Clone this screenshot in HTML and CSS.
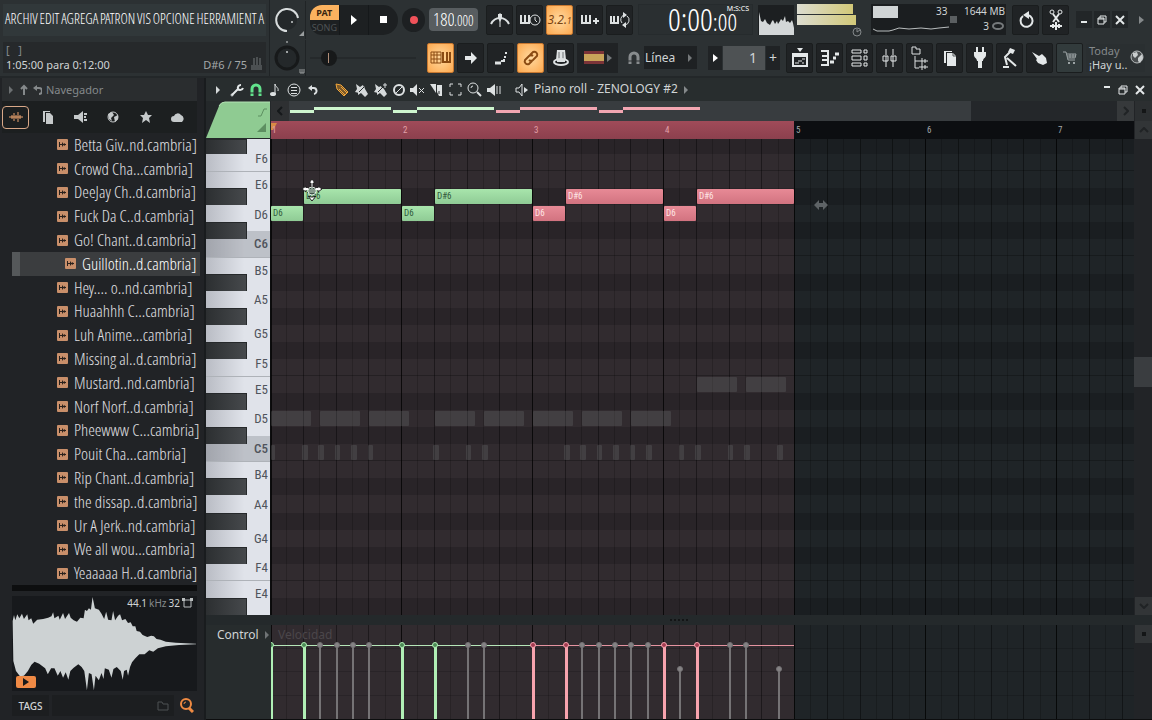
FILE: index.html
```html
<!DOCTYPE html>
<html lang="es">
<head>
    <meta charset="UTF-8">
    <meta name="viewport" content="width=device-width, initial-scale=1.0">
    <title>Piano roll - ZENOLOGY #2</title>
    <link rel="stylesheet" href="styles.css">
</head>
<body>
    <header class="top">
        <div class="top-left">
            <nav class="menu">
                <button>ARCHIV</button><button>EDIT</button><button>AGREGA</button><button>PATRON</button><button>VIS</button><button>OPCIONE</button><button>HERRAMIENT</button><button>A</button>
            </nav>
            <div class="hint">
                <div class="hint-keys">[ &nbsp; ]</div>
                <div class="hint-line">
                    <span>1:05:00 para 0:12:00</span>
                    <span class="hint-note">D#6 / 75</span>
                    <svg width="12" height="14" viewBox="0 0 12 14"><path d="M3 1v8M6 0v9M9 1v8M1 9h9v3H1z" fill="#4c5052" stroke="#4c5052" stroke-width="2"/></svg>
                </div>
            </div>
        </div>

        <div class="bars">
            <div class="bar">
                <div class="knob-cell">
                    <svg width="36" height="38" viewBox="0 0 36 38"><circle cx="17" cy="19" r="10" fill="#24282a"/><path d="M17 30A11 11 0 1 1 28 17" fill="none" stroke="#d8dcdd" stroke-width="2"/><circle cx="22" cy="21" r="1" fill="#c9cdce"/><path d="M34 30v5h-5z" fill="#9a9e9f"/></svg>
                </div>
                <div class="transport">
                    <button class="mode"><span class="pat">PAT</span><span class="song">SONG</span></button>
                    <button aria-label="Play"><svg width="8" height="12" viewBox="0 0 8 12"><path d="M1 1l6 5-6 5z" fill="#fff"/></svg></button>
                    <button aria-label="Stop"><svg width="8" height="8"><rect width="7" height="7" fill="#fff"/></svg></button>
                </div>
                <button class="record" aria-label="Rec"><svg width="10" height="10"><circle cx="5" cy="5" r="4" fill="#f0525a"/></svg></button>
                <label class="tempo"><input value="180" aria-label="Tempo"><span>.000</span></label>
                <div class="tools">
                    <button class="tool" aria-label="Metronome"><svg width="22" height="20" viewBox="0 0 22 20"><path d="M2 14Q5 8 11 8t9 6" fill="none" stroke="#dde1e2" stroke-width="2"/><path d="M11 17V3" stroke="#dde1e2"/><path d="M9 4h4v4l-2 4-2-4z" fill="#dde1e2"/></svg></button>
                    <button class="tool" aria-label="Wait"><svg width="22" height="18" viewBox="0 0 22 18"><path d="M2 4v8h9M6 4v8M10 4v8" fill="none" stroke="#dde1e2" stroke-width="2"/><circle cx="16" cy="9" r="5" fill="#202325" stroke="#dde1e2" stroke-width="1"/><path d="M16 6v3l2 2" fill="none" stroke="#dde1e2"/></svg></button>
                    <button class="tool on" aria-label="Countdown"><span class="lcd">3.2.<small>1</small></span></button>
                    <button class="tool" aria-label="Blend"><svg width="20" height="18" viewBox="0 0 20 18"><path d="M2 4v8h9M6 4v8M10 4v8M13 10h6M16 7v6" fill="none" stroke="#dde1e2" stroke-width="2"/></svg></button>
                    <button class="tool" aria-label="Loop"><svg width="20" height="18" viewBox="0 0 20 18"><path d="M1 5v7h8M4 5v7M8 5v7" fill="none" stroke="#dde1e2" stroke-width="2"/><path d="M12 12a5 5 0 0 1 2-8M17 5a5 5 0 0 1-2 9" fill="none" stroke="#dde1e2"/><path d="M13 1l4 3-4 3zM16 11l-4 3 4 3z" fill="#dde1e2"/></svg></button>
                </div>
                <div class="clock">
                    <span class="clock-big">0:00</span><span class="clock-cs">:00</span><span class="clock-unit">M:S:CS</span>
                </div>
                <svg class="scope" width="36" height="30" viewBox="0 0 36 30"><path d="M1 30V7l2 9 2 1 2-3 2 4 3 2 2-4 1-1 2 4 2-3 1 3 2-3 1-2 2 2 2-5 1 6 2-1 2 2 2-3 1 3 1 5v9z" fill="#d3d7d8"/></svg>
                <div class="meters">
                    <i class="meter meter-l"></i>
                    <i class="meter meter-r"></i>
                    <svg width="11" height="10" viewBox="0 0 11 10"><ellipse cx="5" cy="5" rx="4" ry="4" fill="none" stroke="#84888a" stroke-width="1"/><path d="M5 5l3-2M5 5V2" stroke="#84888a"/></svg>
                </div>
                <div class="cpu">
                    <div class="cpu-col">
                        <i class="cpu-bar"></i>
                        <svg width="78" height="8" viewBox="0 0 78 8"><path d="M1 3l4 2 12 0 4-1 6-2 10 1 12-1 10 1 8-1 10-1" fill="none" stroke="#b9bdbe" stroke-width="1"/></svg>
                    </div>
                    <span class="cpu-load">33</span>
                    <svg class="cpu-chip" width="7" height="7"><rect width="7" height="7" fill="#5b5f61"/></svg>
                    <div class="cpu-mem"><span>1644 MB</span><span>3 <svg width="13" height="9" viewBox="0 0 13 9"><ellipse cx="6" cy="4" rx="5" ry="3" fill="none" stroke="#75797b" stroke-width="2"/></svg></span></div>
                </div>
                <div class="tools">
                    <button class="tool" aria-label="Undo"><svg width="18" height="20" viewBox="0 0 18 20"><path d="M6 6A6 6 0 1 0 11 5" fill="none" stroke="#e4e8e9" stroke-width="2"/><path d="M12 1v8L6 5z" fill="#e4e8e9"/></svg></button>
                    <button class="tool" aria-label="Cut"><svg width="16" height="22" viewBox="0 0 16 22"><circle cx="4" cy="3" r="2" fill="none" stroke="#e4e8e9"/><circle cx="12" cy="3" r="2" fill="none" stroke="#e4e8e9"/><path d="M5 5l6 8M11 5l-6 8" stroke="#e4e8e9" stroke-width="2"/><path d="M2 17h12M5 15v4M8 13v8M11 15v4" stroke="#e4e8e9" stroke-width="2"/></svg></button>
                </div>
                <div class="win">
                    <button aria-label="Minimizar"><svg width="9" height="9"><path d="M1 7h6" stroke="#e4e8e9" stroke-width="2"/></svg></button>
                    <button aria-label="Restaurar"><svg width="10" height="10" viewBox="0 0 10 10"><path d="M1 3h6v6H1zM3 3V1h6v6H7M1 4h6" fill="none" stroke="#e4e8e9"/></svg></button>
                    <button aria-label="Cerrar"><svg width="10" height="10"><path d="M1 1l8 8M9 1L1 9" stroke="#e4e8e9" stroke-width="2"/></svg></button>
                </div>
                <svg class="more" width="5" height="8"><path d="M0 0l5 4-5 4z" fill="#85898b"/></svg>
            </div>

            <div class="bar">
                <div class="knob-cell">
                    <svg width="36" height="36" viewBox="0 0 36 36"><circle cx="17" cy="18" r="11" fill="#24282a" stroke="#17191a" stroke-width="3"/><circle cx="17" cy="12" r="1" fill="#c9cdce"/><circle cx="17" cy="2" r="1" fill="#9a9e9f"/><path d="M30 29v4h4v-4M32 29v4" fill="none" stroke="#9a9e9f"/></svg>
                </div>
                <div class="slide"><input type="range" min="0" max="100" value="12" aria-label="Pitch"></div>
                <div class="tools">
                    <button class="tool on" aria-label="Typing keyboard"><svg width="22" height="14" viewBox="0 0 22 14"><path d="M1 1h10v11H1zM1 4h10M1 8h10M4 1v11M7 1v11" fill="none" stroke="#8a4a12"/><path d="M13 1v10h8M17 1v10M20 1v10" fill="none" stroke="#8a4a12" stroke-width="2"/></svg></button>
                    <button class="tool" aria-label="Step"><svg width="16" height="14" viewBox="0 0 16 14"><path d="M2 5h6V1l6 6-6 6V9H2z" fill="#e4e8e9"/></svg></button>
                    <button class="tool" aria-label="Slide"><svg width="16" height="16" viewBox="0 0 16 16"><path d="M2 13h6" stroke="#dde1e2" stroke-width="3"/><path d="M8 11h3V9M11 7h2M12 3h2" fill="none" stroke="#dde1e2" stroke-width="2"/></svg></button>
                    <button class="tool on" aria-label="Link"><svg width="18" height="18" viewBox="0 0 18 18"><path d="M8 6l3-3a3 3 0 0 1 4 4l-4 4a3 3 0 0 1-4 0M10 12l-3 3a3 3 0 0 1-4-4l4-4a3 3 0 0 1 4 0" fill="none" stroke="#8a4a12" stroke-width="2"/></svg></button>
                    <button class="tool" aria-label="Multilink"><svg width="18" height="20" viewBox="0 0 18 20"><path d="M5 2h8l1 10H4z" fill="#dde1e2"/><path d="M7 4v8M11 4v8" stroke="#6d7173"/><ellipse cx="9" cy="14" rx="7" ry="3" fill="none" stroke="#dde1e2" stroke-width="2"/><path d="M5 11h8v3H5z" fill="#dde1e2"/></svg></button>
                </div>
                <button class="flag" aria-label="Color"><i></i><svg width="5" height="8"><path d="M0 0l5 4-5 4z" fill="#74787a"/></svg></button>
                <label class="snap">
                    <svg width="12" height="14" viewBox="0 0 12 14"><path d="M2 13V6a4 4 0 0 1 8 0v7" fill="none" stroke="#888c8e" stroke-width="3"/><path d="M0 10h12" stroke="#2c3133"/></svg>
                    <select aria-label="Ajuste"><option>Línea</option></select>
                    <svg class="snap-arrow" width="5" height="8"><path d="M0 0l4 4-4 4z" fill="#74787a"/></svg>
                </label>
                <div class="pattern">
                    <button aria-label="Anterior"><svg width="5" height="8"><path d="M0 0l5 4-5 4z" fill="#fff"/></svg></button>
                    <input value="1" aria-label="Patrón">
                    <button>+</button>
                </div>
                <div class="tools">
                    <button class="tool" aria-label="Playlist"><svg width="18" height="20" viewBox="0 0 18 20"><path d="M2 6h14v12H2zM2 8h14" fill="none" stroke="#e4e8e9" stroke-width="2"/><path d="M6 0h6L9 4z" fill="#e4e8e9"/><path d="M4 15h4M7 13h4M11 11h3M11 15h2" stroke="#e4e8e9"/></svg></button>
                    <button class="tool" aria-label="Piano roll"><svg width="20" height="18" viewBox="0 0 20 18"><path d="M1 2h7v14H1M2 7h5M2 11h5" fill="none" stroke="#e4e8e9" stroke-width="2"/><path d="M10 13h4M13 9h3M15 5h4" stroke="#e4e8e9" stroke-width="3"/></svg></button>
                    <button class="tool" aria-label="Channel rack"><svg width="18" height="20" viewBox="0 0 18 20"><path d="M1 2h9v3H1zM1 8h9v4H1zM1 15h9v3H1zM13 2h3v3h-3zM13 8h3v4h-3zM13 15h3v3h-3z" fill="none" stroke="#e4e8e9"/></svg></button>
                    <button class="tool" aria-label="Mixer"><svg width="16" height="20" viewBox="0 0 16 20"><path d="M4 1v6M4 13v6M11 1v6M11 13v6M1 8h5v5H1zM9 8h5v5H9zM4 8v5M11 8v5" fill="none" stroke="#e4e8e9"/></svg></button>
                    <button class="tool" aria-label="Browser"><svg width="20" height="24" viewBox="0 0 20 24"><path d="M2 8V1h4v2h4v5zM5 10v12h4M5 15h4" fill="none" stroke="#dde1e2"/><path d="M9 15h9M12 12v6M15 13v4M9 21h9M12 18v6M15 19v4" stroke="#dde1e2"/></svg></button>
                    <button class="tool" aria-label="Plugins"><svg width="14" height="16" viewBox="0 0 14 16"><path d="M1 1h8v1H3v11H1z" fill="#e4e8e9"/><path d="M4 3h6l3 3v10H4z" fill="#e4e8e9"/><path d="M10 3v3h3" fill="none" stroke="#54585a"/></svg></button>
                    <button class="tool" aria-label="Plug"><svg width="14" height="22" viewBox="0 0 14 22"><path d="M4 0v5M10 0v5" stroke="#e4e8e9" stroke-width="2"/><path d="M1 5h12v3c0 3-3 3-3 6H9v7H5v-7H4c0-3-3-3-3-6z" fill="#e4e8e9"/></svg></button>
                    <button class="tool" aria-label="Project"><svg width="18" height="22" viewBox="0 0 18 22"><path d="M9 1l5 2-2 4-5-2z" fill="#e4e8e9"/><path d="M9 5L4 10l2 8M6 11l9 8M2 20h6" fill="none" stroke="#e4e8e9" stroke-width="2"/></svg></button>
                    <button class="tool" aria-label="Touch"><svg width="18" height="16" viewBox="0 0 18 16"><path d="M1 2l7 4 3-2 4 4 1 5-4 2-5-2-2-3 1-1z" fill="#e4e8e9"/></svg></button>
                    <button class="tool cart" aria-label="Shop"><svg width="14" height="14" viewBox="0 0 14 14"><path d="M0 1h3l2 8h7M4 3h9l-1 4H5M7 3v4M10 3v4M4 5h9" fill="none" stroke="#9ba3a4"/><path d="M5 11h2v2H5zM10 11h2v2h-2z" fill="#9ba3a4"/></svg></button>
                </div>
                <div class="news">
                    <div><div class="news-day">Today</div><div>¡Hay u..</div></div>
                    <svg width="15" height="15" viewBox="0 0 15 15"><circle cx="7" cy="7" r="6" fill="#4a4e50" stroke="#b9bdbe"/><path d="M3 3l4-1 1 3-3 3-2-2zM8 8l4-4 1 4-3 5-2-2z" fill="#c9cdce"/></svg>
                </div>
            </div>
        </div>
    </header>

    <main class="work">
        <aside class="browser">
            <div class="nav-head">
                <svg width="34" height="12" viewBox="0 0 34 12"><path d="M1 2l4 4-4 4z" fill="#6c7072"/><path d="M16 11V3M13 5l3-3 3 3" fill="none" stroke="#85898b" stroke-width="2"/><path d="M28 4h3a3 3 0 0 1 0 6" fill="none" stroke="#85898b" stroke-width="2"/><path d="M29 1v6l-4-3z" fill="#85898b"/></svg>
                <span>Navegador</span>
            </div>
            <div class="tabs">
                <button class="tab active" aria-label="Audio"><svg width="14" height="10" viewBox="0 0 14 10"><path d="M0 5h14M3 3v4M5 1v8M7 3v4M9 0v10M11 3v4" stroke="#e9a26f"/></svg></button>
                <button class="tab" aria-label="Archivos"><svg width="12" height="14" viewBox="0 0 12 14"><path d="M1 1h7v1H3v10H1z" fill="#c5c9ca"/><path d="M4 3h4l3 3v8H4z" fill="#c5c9ca"/></svg></button>
                <button class="tab" aria-label="Plugins"><svg width="14" height="14" viewBox="0 0 14 14"><path d="M0 5h4l5-4v12L4 9H0z" fill="#c5c9ca"/><path d="M10 4h3M10 10h3M10 7h2" stroke="#c5c9ca" stroke-width="2"/></svg></button>
                <button class="tab" aria-label="Online"><svg width="14" height="14" viewBox="0 0 14 14"><circle cx="7" cy="7" r="5" fill="none" stroke="#c5c9ca"/><path d="M2 4l4-2 2 3-3 3 1 3-3-2zM8 7l4-2v4l-3 3z" fill="#c5c9ca"/></svg></button>
                <button class="tab" aria-label="Favoritos"><svg width="12" height="12" viewBox="0 0 12 12"><path d="M6 0l2 4 4 0-3 3 1 5-4-3-4 3 1-5-3-3h4z" fill="#c5c9ca"/></svg></button>
                <button class="tab" aria-label="Nube"><svg width="14" height="10" viewBox="0 0 14 10"><path d="M3 10a3 3 0 0 1 0-6 4 4 0 0 1 7-1 4 4 0 0 1 1 7z" fill="#c5c9ca"/></svg></button>
            </div>
            <ul class="files" id="files"></ul>
            <div class="strip"></div>
            <div class="preview">
                <div class="preview-info">44.1 <span>kHz</span> 32 <svg width="11" height="10" viewBox="0 0 11 10"><path d="M2 2h7v7H2z" fill="none" stroke="#b9bdbe"/><path d="M0 0h3v3H0zM8 0h3v3H8z" fill="#b9bdbe"/></svg></div>
                <svg class="wave" viewBox="36 105 558 285" preserveAspectRatio="none"><path d="M38 180L42 162 46 178 52 160 58 172 66 158 72 174 82 160 86 178 94 172 100 188 112 176 130 174 145 170 155 166 160 154 164 172 176 164 180 176 190 156 196 174 208 156 213 170 222 178 232 182 242 170 252 172 256 146 262 150 268 142 274 146 279 108 286 142 298 146 306 158 314 174 320 152 326 176 336 178 341 150 347 178 356 164 362 160 368 178 378 174 386 186 394 184 400 196 408 196 412 210 422 212 430 222 444 228 456 224 464 226 472 234 484 236 500 242 530 245 560 247 591 248 591 250 540 252 500 256 476 262 462 272 450 268 436 280 420 280 408 292 398 304 392 318 386 344 382 326 374 330 370 356 364 330 352 318 342 324 336 350 328 326 316 322 312 354 306 336 298 358 288 344 283 388 276 340 268 336 262 388 254 330 246 318 236 310 222 320 212 330 206 356 198 334 190 350 182 330 174 344 164 322 154 322 144 340 136 322 118 308 104 302 94 312 84 330 72 344 60 346 48 330 40 300z" fill="#cdd2d3"/></svg>
                <button class="preview-play" aria-label="Reproducir"><svg width="6" height="8"><path d="M0 0l6 4-6 4z" fill="#1a1a1a"/></svg></button>
            </div>
            <div class="tags">
                <button class="tags-btn">TAGS</button>
                <div class="tags-field">
                    <svg width="12" height="10" viewBox="0 0 12 10"><path d="M1 9V1h4l1 2h5v6z" fill="none" stroke="#4c5052"/></svg>
                </div>
                <svg width="15" height="15" viewBox="0 0 15 15"><circle cx="7" cy="6" r="5" fill="none" stroke="#ef8a42" stroke-width="2"/><path d="M5 6a2 2 0 0 1 2-2" fill="none" stroke="#ef8a42"/><path d="M10 10l4 4" stroke="#ef8a42" stroke-width="3"/></svg>
            </div>
        </aside>

        <section class="roll">
            <div class="roll-head">
                <svg class="tri" width="5" height="8"><path d="M0 0l4 4-4 4z" fill="#d5d9da"/></svg>
                <div class="roll-tools">
                    <button aria-label="Herramientas"><svg width="14" height="14" viewBox="0 0 14 14"><path d="M2 12l6-6M8 6a3 3 0 0 1 3-4M8 6a3 3 0 0 0 5-1" fill="none" stroke="#e4e8e9" stroke-width="2"/><circle cx="2" cy="12" r="1" fill="none" stroke="#e4e8e9"/></svg></button>
                    <button aria-label="Imán"><svg width="12" height="14" viewBox="0 0 12 14"><path d="M2 13V6a4 4 0 0 1 8 0v7" fill="none" stroke="#62e38c" stroke-width="3"/><path d="M0 10h12" stroke="#282d2e"/></svg></button>
                    <button aria-label="Sello"><svg width="10" height="14" viewBox="0 0 10 14"><ellipse cx="3" cy="11" rx="3" ry="2" fill="#dde1e2"/><path d="M5 11V1c0 3 4 3 3 7" fill="none" stroke="#dde1e2" stroke-width="1"/></svg></button>
                    <button aria-label="Opciones"><svg width="14" height="14" viewBox="0 0 14 14"><circle cx="7" cy="7" r="6" fill="none" stroke="#dde1e2"/><path d="M4 4h6v1H4zM4 7h6v1H4zM4 10h6v1H4z" fill="#dde1e2"/></svg></button>
                    <button aria-label="Deshacer"><svg width="12" height="12" viewBox="0 0 12 12"><path d="M4 4h2a3 3 0 0 1 1 6" fill="none" stroke="#dde1e2" stroke-width="2"/><path d="M5 1v6L1 4z" fill="#dde1e2"/></svg></button>
                </div>
                <div class="roll-tools paint">
                    <button aria-label="Dibujar"><svg width="14" height="14" viewBox="0 0 14 14"><path d="M1 1l5 1 7 7-4 4-7-7z" fill="#7c5a2a" stroke="#f0a53a" stroke-width="1"/><path d="M4 6l6 6M6 4l6 6" stroke="#f0a53a"/></svg></button>
                    <button aria-label="Pintar"><svg width="14" height="14" viewBox="0 0 14 14"><path d="M2 1l4 3 3-2 1 3-5 5-4-1 2-3z" fill="#d5d9da"/><path d="M4 9l6-6 1 3 3 5-3 3-4-4-3 2z" fill="#d5d9da"/><path d="M5 9l5-5" stroke="#282d2e"/></svg></button>
                    <button aria-label="Pintar percusión"><svg width="14" height="14" viewBox="0 0 14 14"><path d="M2 1l4 3 2-1 1 3-4 4-4-1 2-3z" fill="#d5d9da"/><path d="M4 9l5-5 2 2 3 5-3 3-4-4-3 2z" fill="#d5d9da"/><path d="M5 9l5-5" stroke="#282d2e"/><path d="M12 0v5M10 2h4" stroke="#d5d9da"/></svg></button>
                    <button aria-label="Borrar"><svg width="14" height="14" viewBox="0 0 14 14"><circle cx="7" cy="7" r="5" fill="none" stroke="#dde1e2" stroke-width="2"/><path d="M4 10l6-6" stroke="#dde1e2" stroke-width="1"/></svg></button>
                    <button aria-label="Silenciar"><svg width="15" height="14" viewBox="0 0 15 14"><path d="M0 5h3l4-4v12L3 9H0z" fill="#dde1e2"/><path d="M9 5l5 5M14 5l-5 5" stroke="#dde1e2"/></svg></button>
                    <button aria-label="Cortar"><svg width="13" height="14" viewBox="0 0 13 14"><path d="M0 1h6v9z" fill="#dde1e2"/><path d="M7 2h5v11H9L7 9z" fill="#dde1e2"/><path d="M9 8v3" stroke="#282d2e"/></svg></button>
                    <button aria-label="Seleccionar"><svg width="13" height="13" viewBox="0 0 13 13"><path d="M1 4V1h3M9 1h3v3M12 9v3H9M4 12H1V9" fill="none" stroke="#dde1e2" stroke-width="1"/></svg></button>
                    <button aria-label="Zoom"><svg width="15" height="15" viewBox="0 0 15 15"><circle cx="6" cy="6" r="5" fill="none" stroke="#dde1e2"/><path d="M4 6a2 2 0 0 1 2-2" fill="none" stroke="#dde1e2"/><path d="M10 10l4 4" stroke="#dde1e2" stroke-width="2"/></svg></button>
                    <button aria-label="Reproducir"><svg width="14" height="14" viewBox="0 0 14 14"><path d="M0 5h3l5-4v12L3 9H0z" fill="#dde1e2"/><path d="M10 3v8M13 3v8" stroke="#dde1e2"/></svg></button>
                </div>
                <svg class="speaker" width="14" height="14" viewBox="0 0 14 14"><path d="M1 5h3l3-4v12L4 9H1z" fill="none" stroke="#dde1e2"/><path d="M9 4l4 3-4 3z" fill="#dde1e2"/></svg>
                <h1>Piano roll - ZENOLOGY #2</h1>
                <svg class="tri" width="5" height="8"><path d="M0 0l4 4-4 4z" fill="#85898b"/></svg>
                <div class="roll-win">
                    <button aria-label="Minimizar"><svg width="9" height="9"><path d="M2 2h6" stroke="#e4e8e9" stroke-width="2"/></svg></button>
                    <button aria-label="Restaurar"><svg width="10" height="10" viewBox="0 0 10 10"><path d="M1 3h6v6H1zM3 3V1h6v6H7M1 4h6" fill="none" stroke="#e4e8e9"/></svg></button>
                    <button aria-label="Cerrar"><svg width="10" height="10"><path d="M1 1l8 8M9 1L1 9" stroke="#e4e8e9" stroke-width="2"/></svg></button>
                </div>
            </div>

            <div class="roll-body">
                <div class="corner">
                    <svg viewBox="0 0 64 37" preserveAspectRatio="none"><path d="M0 37L13 5Q15 1 19 1H64V37z" fill="#8fcb92"/><path d="M13 5Q15 1 19 1H64" fill="none" stroke="#b4e3b5"/><path d="M52 15h3l3-7h3" fill="none" stroke="#5d8f61"/><path d="M60 22v9h-9z" fill="#5d8f61"/></svg>
                </div>
                <div class="timeline">
                    <div class="overview">
                        <button class="ov-left" aria-label="Izquierda"><svg width="6" height="10"><path d="M5 1L1 5l4 4" fill="none" stroke="#15181a" stroke-width="2"/></svg></button>
                        <div class="ov-thumb"><svg id="overview" width="420" height="20"></svg></div>
                        <button class="ov-right" aria-label="Derecha"><svg width="6" height="10"><path d="M1 1l4 4-4 4" fill="none" stroke="#202325" stroke-width="2"/></svg></button>
                    </div>
                    <div class="ruler" id="ruler"></div>
                </div>
                <div class="side-top">
                    <button aria-label="Vista"><i class="dot"></i></button>
                    <button aria-label="Arriba"><svg width="10" height="6"><path d="M1 5l4-4 4 4" fill="none" stroke="#202325" stroke-width="2"/></svg></button>
                </div>

                <div class="keys">
                    <div class="white-keys" id="whiteKeys"></div>
                    <div class="black-keys rows" id="blackKeys"></div>
                </div>
                <div class="canvas">
                    <div class="rows lanes" id="lanes"></div>
                    <svg class="lines" id="gridLines"></svg>
                    <div class="rows notes" id="notes"></div>
                    <svg class="cursor" width="20" height="22" viewBox="0 0 20 22"><path d="M10 0l3 4h-2v4H9V4H7zM0 10l4-3v6zM20 10l-4-3v6z" fill="#fff" stroke="#222"/><path d="M3 10h3M14 10h3" stroke="#fff" stroke-width="2"/><circle cx="10" cy="12" r="4" fill="#3c5245" stroke="#dfe9e2"/><path d="M8 10v4M10 9v5M12 10v4" stroke="#cfe0d4"/><path d="M6 17l4 5 4-5-3 1H9z" fill="#fff" stroke="#222"/></svg>
                    <svg class="resize" width="14" height="12" viewBox="0 0 14 12"><path d="M0 6l5-5v3h4V1l5 5-5 5V8H5v3z" fill="#5e6366"/></svg>
                </div>
                <div class="scroll-v">
                    <i class="thumb-v"></i>
                    <button aria-label="Abajo"><svg width="10" height="6"><path d="M1 1l4 4 4-4" fill="none" stroke="#202325" stroke-width="2"/></svg></button>
                </div>

                <div class="splitter"><i></i></div>

                <div class="control-name"><button>Control <svg width="4" height="8"><path d="M0 0l4 4-4 4z" fill="#6f7375"/></svg></button></div>
                <div class="canvas velocity">
                    <svg class="lines" id="velLines"></svg>
                    <span>Velocidad</span>
                    <svg class="lines" id="stems"></svg>
                </div>
                <div class="side-bottom"><button aria-label="Ampliar"><i class="dot"></i></button></div>
            </div>
        </section>
    </main>

    <script src="script.js"></script>
</body>
</html>
```
FILE: styles.css
```css
* {
    box-sizing: border-box;
}
body {
    margin: 0;
    height: 100vh;
    display: flex;
    flex-direction: column;
    overflow: hidden;
    background: #24282a;
    color: #d0d4d5;
    font-family: "Noto Sans", "Open Sans", sans-serif;
    font-size: 12px;
}
button, input, select {
    font: inherit;
    color: inherit;
    background: none;
    border: 0;
    padding: 0;
    margin: 0;
}
button {
    display: flex;
    align-items: center;
    justify-content: center;
    cursor: pointer;
}
svg {
    display: block;
    flex: none;
}

/* top bars */
.top {
    display: flex;
    height: 78px;
    background: #2c3133;
    border-bottom: 2px solid #232729;
}
.top-left {
    flex: none;
    width: 270px;
    padding: 4px 3px 3px;
    display: flex;
    flex-direction: column;
    gap: 6px;
    border-right: 1px solid #202426;
}
.menu, .files, .tempo, .clock {
    font-family: "Open Sans Condensed Light", "Roboto Condensed", sans-serif;
}
.menu {
    display: flex;
    justify-content: space-between;
    align-items: center;
    height: 32px;
    padding: 0 2px 2px;
    background: #31383a;
    color: #fff;
    font-size: 14px;
}
.hint {
    height: 32px;
    padding: 0 3px;
    background: #26292b;
    line-height: 15px;
}
.hint-keys {
    color: #85898b;
    font-size: 11px;
}
.hint-line {
    display: flex;
    font-size: 11px;
}
.hint-note {
    margin-left: auto;
    margin-right: 4px;
    color: #a4a8a9;
}
.bars {
    flex: 1;
    display: flex;
    flex-direction: column;
}
.bar {
    display: flex;
    align-items: center;
    height: 39px;
}
.bar + .bar {
    height: 37px;
}
.knob-cell {
    width: 36px;
    margin-right: 4px;
    border-right: 1px solid #202426;
}
.transport {
    display: flex;
    width: 88px;
    height: 30px;
    border-radius: 12px 15px 15px 12px;
    background: #1d2022;
    overflow: hidden;
}
.transport button {
    flex: 1;
    border-left: 1px solid #15181a;
}
.transport .mode {
    flex-direction: column;
    border: 0;
    font-size: 9px;
    line-height: 15px;
    color: #4f5355;
}
.mode span {
    width: 100%;
}
.mode .pat {
    background: #fbb25f;
    color: #3a2410;
    font-weight: bold;
}
.record {
    width: 23px;
    height: 24px;
    margin: 0 4px;
    border-radius: 12px;
    background: #1d2022;
}
.tempo {
    display: flex;
    align-items: baseline;
    width: 49px;
    height: 23px;
    margin-right: 8px;
    padding-left: 4px;
    border-radius: 4px;
    background: #585d60;
    color: #fff;
    font-size: 14px;
    line-height: 22px;
}
.tempo input {
    width: 21px;
    font-size: 18px;
}
.tools {
    display: flex;
    gap: 3px;
}
.tool {
    width: 27px;
    height: 30px;
    border-radius: 2px;
    background: #202325;
    border: 1px solid #1a1d1e;
}
.tool.on {
    background: radial-gradient(#ffd9a0, #fda94f);
    border-color: #c87830;
}
.tool.cart {
    background: #323b3c;
}
.lcd {
    color: #7a4312;
    font-style: italic;
    font-size: 12px;
}
.lcd small {
    font-size: 8px;
}
.clock {
    position: relative;
    display: flex;
    align-items: baseline;
    justify-content: flex-end;
    width: 115px;
    height: 31px;
    margin: 0 5px;
    padding-right: 15px;
    background: #2a2f31;
    border: 1px solid #262b2d;
    color: #fff;
    line-height: 27px;
}
.clock-big {
    font-size: 32px;
}
.clock-cs {
    font-size: 24px;
}
.clock-unit {
    position: absolute;
    top: 0;
    right: 3px;
    font: 7px/8px "Noto Sans", sans-serif;
}
.scope {
    background: #1c1f21;
}
.meters {
    width: 60px;
    height: 31px;
    margin-left: 3px;
    margin-right: 14px;
    display: flex;
    flex-direction: column;
    gap: 1px;
}
.meters svg {
    align-self: flex-end;
    margin-top: 1px;
    margin-right: -6px;
}
.meter {
    width: 56px;
    height: 10px;
    flex: none;
    background: linear-gradient(90deg, #dcdcd0, #d2c878);
}
.meter-r {
    width: 59px;
}
.cpu {
    display: flex;
    width: 135px;
    height: 31px;
    margin-right: 6px;
    padding: 0 1px;
    background: #1b1e20;
    font-size: 10px;
    line-height: 15px;
}
.cpu-col {
    width: 64px;
}
.cpu-bar {
    display: block;
    width: 25px;
    height: 12px;
    margin: 2px 0 8px 1px;
    background: #d0d4d5;
}
.cpu-load {
    width: 14px;
}
.cpu-chip {
    align-self: center;
}
.cpu-mem {
    flex: 1;
    display: flex;
    flex-direction: column;
    align-items: flex-end;
}
.cpu-mem span {
    display: flex;
    align-items: center;
    gap: 3px;
    white-space: nowrap;
}
.win {
    display: flex;
    gap: 2px;
    margin-left: 7px;
}
.win button {
    width: 16px;
    height: 17px;
    background: #222628;
}
.more {
    margin-left: auto;
    margin-right: 8px;
}
.slide {
    display: flex;
    width: 110px;
    margin-right: 7px;
}
.slide input {
    width: 106px;
    height: 16px;
    margin: 0;
    -webkit-appearance: none;
    background: linear-gradient(#25292b, #25292b) center / 100% 2px no-repeat;
}
.slide input::-webkit-slider-thumb {
    -webkit-appearance: none;
    width: 16px;
    height: 16px;
    border-radius: 8px;
    background: linear-gradient(#b08d78, #b08d78) center / 1px 10px no-repeat, #17191a;
}
.flag {
    width: 41px;
    height: 30px;
    margin: 0 10px 0 3px;
    gap: 3px;
    background: #202325;
}
.flag i {
    width: 20px;
    height: 13px;
    background: #c9a45a;
    border: solid #7c3438;
    border-width: 3px 0;
}
.snap {
    display: flex;
    align-items: center;
    gap: 4px;
    margin-right: 11px;
}
.snap select {
    width: 53px;
    height: 23px;
    padding-left: 1px;
    -webkit-appearance: none;
    background: #1e2123;
}
.snap-arrow {
    margin-left: -13px;
    margin-right: 4px;
}
.pattern {
    display: flex;
    gap: 1px;
    margin-right: 6px;
}
.pattern button {
    width: 14px;
    height: 24px;
    background: #202325;
    font-size: 14px;
}
.pattern input {
    width: 42px;
    height: 24px;
    padding-right: 8px;
    background: #4e5254;
    text-align: right;
    font-size: 14px;
}
.news {
    flex: 1;
    display: flex;
    justify-content: space-between;
    align-items: center;
    margin: 0 7px 0 3px;
    padding-left: 3px;
    background: #2a2f31;
    font-size: 11px;
    line-height: 14px;
}
.news-day {
    color: #85898b;
}

/* browser */
.work {
    flex: 1;
    min-height: 0;
    display: flex;
}
.browser {
    flex: none;
    width: 206px;
    padding: 0 7px 3px 2px;
    display: flex;
    flex-direction: column;
    background: #212326;
    border-right: 2px solid #191c1e;
}
.nav-head {
    display: flex;
    align-items: center;
    gap: 4px;
    height: 23px;
    padding-left: 6px;
    background: #2a2d2f;
    color: #85898b;
    font-size: 11px;
}
.tabs {
    display: flex;
    justify-content: space-between;
    align-items: center;
    height: 32px;
    background: #1c1f20;
    padding-right: 5px;
}
.tab {
    width: 27px;
    height: 23px;
}
.tab.active {
    border: 1px solid #d9a888;
    border-radius: 4px;
}
.files {
    flex: 1;
    min-height: 0;
    margin: 0 0 0 10px;
    padding: 0;
    list-style: none;
    display: grid;
    grid-auto-rows: 1fr;
    color: #e0e0e4;
    font-size: 17px;
}
.files li {
    display: flex;
    align-items: center;
    gap: 6px;
    padding-left: 45px;
    white-space: nowrap;
    line-height: 22px;
    min-height: 0;
}
.files li.selected {
    border-left: 8px solid #55585a;
    background: #3b3d3f;
    color: #fff;
}
.strip {
    height: 6px;
    margin-left: 10px;
    background: #0d0e0f;
}
.preview {
    position: relative;
    height: 95px;
    margin: 5px 0 3px 10px;
    background: #17191c;
}
.wave {
    width: 100%;
    height: 100%;
}
.preview-info {
    position: absolute;
    top: 0;
    right: 4px;
    display: flex;
    align-items: center;
    gap: 2px;
    font-size: 10px;
}
.preview-info span {
    color: #85898b;
}
.preview-play {
    position: absolute;
    left: 4px;
    bottom: 3px;
    width: 20px;
    height: 12px;
    border-radius: 2px;
    background: #f08a45;
}
.tags {
    display: flex;
    align-items: center;
    gap: 3px;
    height: 23px;
    margin-left: 10px;
    padding-right: 3px;
}
.tags-btn {
    width: 37px;
    height: 21px;
    background: #1c1e20;
    font-size: 10px;
    font-weight: 500;
}
.tags-field {
    flex: 1;
    display: flex;
    align-items: center;
    justify-content: flex-end;
    height: 21px;
    padding-right: 5px;
    margin-right: 2px;
    background: #1c1e20;
}

/* piano roll */
.roll {
    flex: 1;
    min-width: 0;
    display: flex;
    flex-direction: column;
}
.roll-head {
    display: flex;
    align-items: center;
    height: 23px;
    padding: 0 4px 0 10px;
    background: #282d2e;
}
.roll-head h1 {
    margin: 0 6px 2px 5px;
    font-size: 12px;
    font-weight: 400;
}
.roll-tools {
    display: flex;
    margin-left: 6px;
}
.roll-tools button {
    width: 19px;
    height: 20px;
}
.roll-tools.paint {
    margin-left: 10px;
}
.speaker {
    margin-left: 12px;
}
.roll-win {
    display: flex;
    gap: 1px;
    margin-left: auto;
}
.roll-win button {
    width: 16px;
}
.roll-body {
    flex: 1;
    min-height: 0;
    display: grid;
    grid-template-columns: 65px 1fr 18px;
    grid-template-rows: 38px 1fr 10px 94px;
    border-bottom: 1px solid #0d0e0f;
}
.corner svg {
    width: 64px;
    height: 37px;
}
.timeline {
    min-width: 0;
}
.overview {
    display: flex;
    height: 20px;
    background: #24272a;
}
.ov-left {
    width: 18px;
    background: #2e3032;
}
.ov-thumb {
    width: 79%;
    background: #383c3f;
}
.ov-right {
    width: 17px;
    margin-left: auto;
    background: #36393b;
}
.ruler {
    position: relative;
    height: 18px;
    overflow: hidden;
    background: #0c0e11;
    font-size: 9px;
    line-height: 18px;
}
.ruler span {
    position: absolute;
    color: #a4a8a9;
    font-family: "Roboto Condensed", "Noto Sans", sans-serif;
}
.ruler .selected {
    color: #e0a0a8;
}
.ruler .selection {
    height: 18px;
    background: linear-gradient(#a04b59, #8c404e);
}
.ruler svg {
    position: absolute;
    left: 0;
    top: 1px;
}
.side-top, .scroll-v, .side-bottom {
    background: #222427;
}
.side-top button, .side-bottom button, .scroll-v button {
    width: 17px;
    height: 18px;
    margin-left: 1px;
    background: #323537;
}
.side-top button:first-child {
    height: 20px;
    background: #2c2f31;
}
.dot {
    width: 4px;
    height: 4px;
    background: #141617;
}
.scroll-v {
    display: flex;
    flex-direction: column;
    justify-content: space-between;
}
.thumb-v {
    height: 30px;
    margin-top: 218px;
    background: #3a3d40;
}
.keys {
    position: relative;
    min-height: 0;
    border-right: 1px solid #0c0d0e;
}
.white-keys {
    position: absolute;
    inset: 0;
    display: flex;
    flex-direction: column;
    background: linear-gradient(90deg, #b9bcc4, #e0e3ea 60%);
    color: #50545c;
    font-family: "Roboto Condensed", "Liberation Sans", sans-serif;
    font-size: 13px;
}
.white-keys div {
    flex-basis: 0;
    min-height: 0;
    display: flex;
    align-items: center;
    justify-content: flex-end;
    padding-right: 2px;
}
.white-keys .edge {
    border-bottom: 1px solid #aeb2b8;
}
.white-keys .c {
    background: rgba(100, 104, 112, 0.28);
    font-weight: 500;
}
/* first row is cut off by the ruler */
.rows {
    position: absolute;
    inset: 0;
    display: grid;
    grid-template-rows: 15px repeat(27, minmax(0, 1fr));
    grid-template-columns: minmax(0, 1fr);
}
.black-keys {
    width: 41px;
}
.black-keys i {
    background: linear-gradient(90deg, #2c2f31, #46494c);
    border: solid #26292b;
    border-width: 1px 1px 0 0;
}
.canvas {
    position: relative;
    min-width: 0;
    overflow: hidden;
    background: linear-gradient(90deg, #312b2f 523px, #1f2427 523px);
}
.lanes i {
    background: rgba(0, 0, 0, 0.15);
}
.lanes .edge {
    background: none;
    border-bottom: 1px solid rgba(0, 0, 0, 0.25);
}
.lines {
    position: absolute;
    left: 0;
    top: 0;
    width: 100%;
    height: 100%;
}
.note {
    grid-column: 1;
    height: 15px;
    margin-top: 1px;
    border-radius: 1px;
    padding-left: 2px;
    font-family: "Roboto Condensed", "Noto Sans", sans-serif;
    font-size: 9px;
    line-height: 15px;
    overflow: hidden;
}
.note.green {
    background: linear-gradient(#a8e5ac, #8fcb95);
    color: #30593a;
}
.note.pink {
    background: linear-gradient(#e78a96, #d27380);
    color: #ffe6e6;
}
.note.ghost {
    background: rgba(120, 122, 124, 0.25);
}
.cursor {
    position: absolute;
    left: 31px;
    top: 40px;
}
.resize {
    position: absolute;
    left: 543px;
    top: 60px;
}
.splitter {
    grid-column: 1 / 4;
    background: #24292b;
    display: flex;
    align-items: center;
    justify-content: center;
}
.splitter i {
    width: 18px;
    border-top: 2px dotted #131516;
}
.control-name {
    background: #272c2d;
    padding: 1px 2px 0 11px;
}
.control-name button {
    width: 100%;
    justify-content: space-between;
}
.velocity span {
    position: absolute;
    left: 7px;
    top: 1px;
    color: #4b464a;
}
```
FILE: script.js
```js
const BAR = 131;
const STEP = BAR / 8;
const SVG = 'http://www.w3.org/2000/svg';

const files = [
    'Betta Giv..nd.cambria]', 'Crowd Cha...cambria]', 'DeeJay Ch..d.cambria]',
    'Fuck Da C..d.cambria]', 'Go! Chant..d.cambria]', 'Guillotin..d.cambria]',
    'Hey.... o..nd.cambria]', 'Huaahhh C...cambria]', 'Luh Anime...cambria]',
    'Missing al..d.cambria]', 'Mustard..nd.cambria]', 'Norf Norf..d.cambria]',
    'Pheewww C...cambria]', 'Pouit Cha...cambria]', 'Rip Chant..d.cambria]',
    'the dissap..d.cambria]', 'Ur A Jerk..nd.cambria]', 'We all wou...cambria]',
    'Yeaaaaa H..d.cambria]'
];

const fileIcon = '<svg width="11" height="11" viewBox="0 0 11 11"><rect width="11" height="11" rx="1" fill="#c98f6a"/><path d="M2 3h1v5H2zM3 5h6v1H3zM5 3l2 2.5L5 8zM7 4l2 1.5L7 7z" fill="#2a211c"/></svg>';

document.getElementById('files').innerHTML = files.map(name =>
    `<li class="${name.startsWith('Guillotin') ? 'selected' : ''}">${fileIcon}<span>${name}</span></li>`
).join('');

// rows from F#6 (top, cut off) to D#4
const names = ['F#', 'F', 'E', 'D#', 'D', 'C#', 'C', 'B', 'A#', 'A', 'G#', 'G'];
const lanes = document.getElementById('lanes');
const blackKeys = document.getElementById('blackKeys');
for (let row = 0; row < 28; row++) {
    const name = names[row % 12];
    if (name.includes('#')) {
        const html = `<i style="grid-row:${row + 1}"></i>`;
        lanes.innerHTML += html;
        blackKeys.innerHTML += html;
    } else if (name === 'F' || name === 'C') {
        lanes.innerHTML += `<i class="edge" style="grid-row:${row + 1}"></i>`;
    }
}

// white keys reach half way under their black neighbours
const size = { F: 1.5, E: 1.5, D: 2, C: 1.5, B: 1.5, A: 2, G: 2 };
const whites = 'F6 E6 D6 C6 B5 A5 G5 F5 E5 D5 C5 B4 A4 G4 F4 E4'.split(' ');
document.getElementById('whiteKeys').innerHTML =
    '<div style="flex-grow:0.4"></div>' +
    whites.map(k => {
        const cls = (k[0] === 'C' ? 'c edge' : k[0] === 'F' ? 'edge' : '');
        return `<div class="${cls}" style="flex-grow:${size[k[0]]}">${k}</div>`;
    }).join('') +
    '<div style="flex-grow:0.5"></div>';

// notes: row, start step, length in steps
const notes = document.getElementById('notes');
function addNote(row, start, length, cls, label) {
    const left = Math.max(0, Math.round(start * STEP));
    const width = Math.round((start + length) * STEP) - left - 1;
    notes.innerHTML += `<div class="note ${cls}" style="grid-row:${row};margin-left:${left}px;width:${width}px">${label || ''}</div>`;
}
[0, 3, 6, 10, 13, 16, 19, 22].forEach(s => addNote(17, s, 2.5, 'ghost'));
[26, 29].forEach(s => addNote(15, s, 2.5, 'ghost'));
[0, 2, 3, 4, 5, 6, 10, 12, 13, 18, 19, 20, 21, 22, 23, 25, 26, 28, 29, 31]
    .forEach(s => addNote(19, s - 0.1, 0.4, 'ghost'));
for (let bar = 0; bar < 4; bar++) {
    const cls = bar < 2 ? 'green' : 'pink';
    addNote(5, bar * 8, 2, cls, 'D6');
    addNote(4, bar * 8 + 2, 6, cls, 'D#6');
}

function add(parent, tag, attrs) {
    const el = document.createElementNS(SVG, tag);
    for (const key in attrs) el.setAttribute(key, attrs[key]);
    parent.appendChild(el);
}

function drawGrid(svg) {
    for (let i = 0; i < 160; i++) {
        const opacity = i % 8 === 0 ? 0.75 : i % 2 === 0 ? 0.4 : 0.18;
        add(svg, 'rect', { x: Math.round(i * STEP) - (i ? 1 : 0), y: 0, width: 1, height: '100%', fill: '#000', opacity });
    }
}
drawGrid(document.getElementById('gridLines'));
drawGrid(document.getElementById('velLines'));
[23, 46, 70].forEach(y => add(document.getElementById('velLines'), 'rect', { x: 0, y, width: '100%', height: 1, fill: '#000', opacity: 0.15 }));

// velocity stems
const stems = document.getElementById('stems');
add(stems, 'rect', { x: 0, y: 20, width: 262, height: 1, fill: '#b5e6b8' });
add(stems, 'rect', { x: 262, y: 20, width: 261, height: 1, fill: '#e593a0' });
function stem(step, color, fill, top, width) {
    const x = Math.round(step * STEP);
    add(stems, 'rect', { x: x - 1, y: top, width, height: '100%', fill: color });
    add(stems, 'circle', { cx: x, cy: top, r: 2.5, fill, stroke: color });
}
[3, 4, 5, 6, 12, 13, 19, 20, 21, 22, 23, 28, 29].forEach(s => stem(s, '#757375', '#858385', 20, 2));
[25, 31].forEach(s => stem(s, '#757375', '#858385', 44, 2));
[0, 2, 8, 10].forEach(s => stem(s, '#b0efb5', '#4c8a56', 20, 3));
[16, 18, 24, 26].forEach(s => stem(s, '#f7a3ae', '#a23a50', 20, 3));

// overview strip
const overview = document.getElementById('overview');
for (let bar = 0; bar < 4; bar++) {
    const fill = bar < 2 ? '#cdf5ce' : '#f3a6b2';
    add(overview, 'rect', { x: bar * 103 + 1, y: 9, width: 24, height: 3, fill });
    add(overview, 'rect', { x: bar * 103 + 25, y: 6, width: 77, height: 3, fill });
}

const ruler = document.getElementById('ruler');
ruler.innerHTML = `<span class="selection" style="width:${BAR * 4 - 1}px"></span>` +
    '<svg width="8" height="9"><path d="M0 1h6l-4 7H0z" fill="#d88a45"/></svg>';
const bars = Math.floor(ruler.clientWidth / BAR);
for (let bar = 0; bar <= bars; bar++) {
    ruler.innerHTML += `<span class="${bar < 4 ? 'selected' : ''}" style="left:${bar * BAR + 1}px">${bar + 1}</span>`;
}
```
